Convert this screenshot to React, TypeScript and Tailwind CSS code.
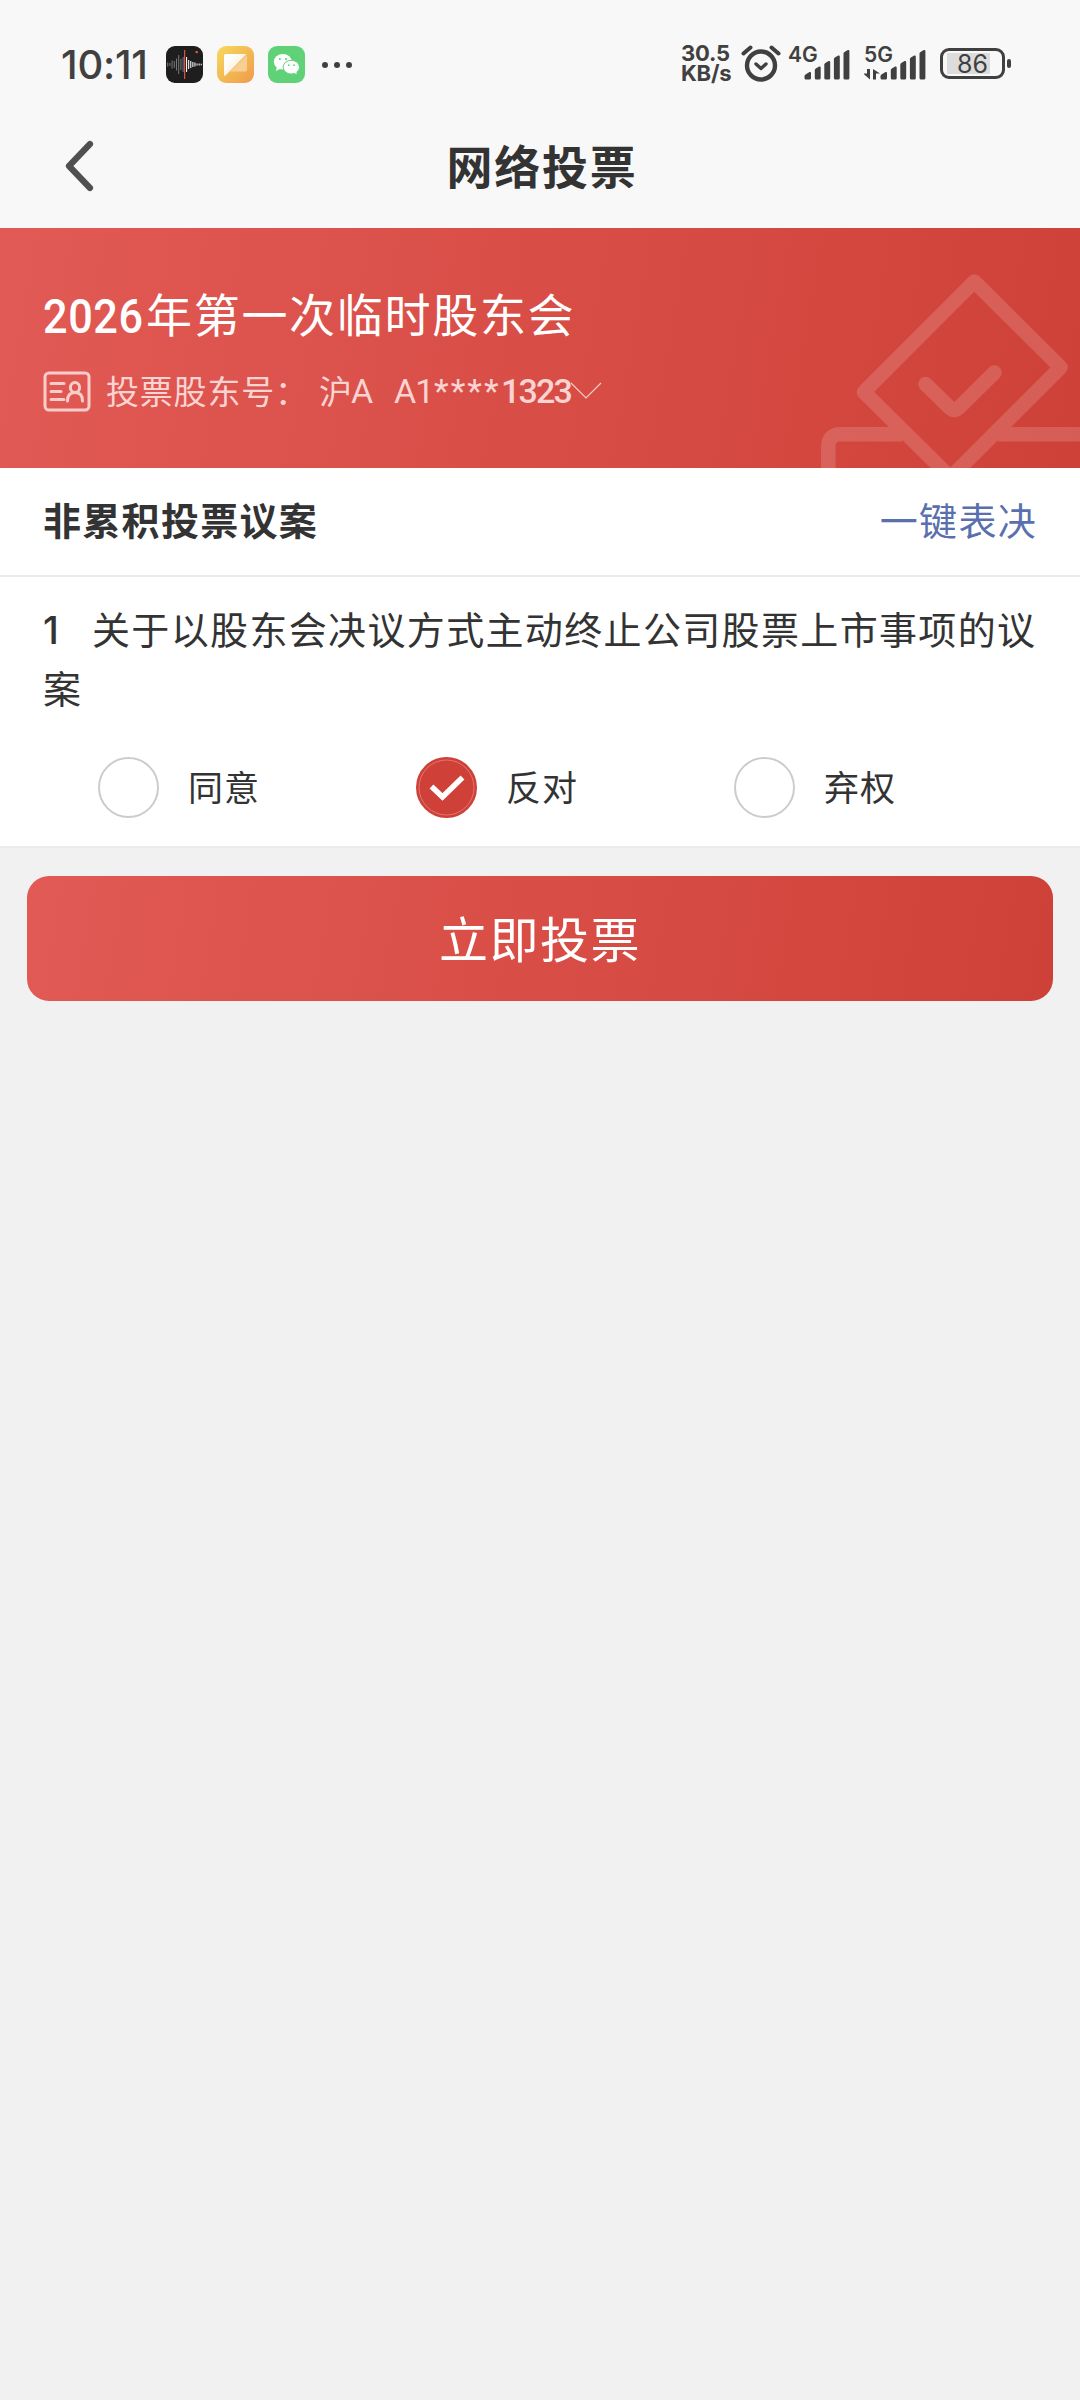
import React, { useState } from 'react'
import clsx from 'clsx'

type Choice = 'agree' | 'against' | 'abstain'

const CHOICES: { value: Choice; label: string }[] = [
  { value: 'agree', label: '同意' },
  { value: 'against', label: '反对' },
  { value: 'abstain', label: '弃权' },
]

const WAVE = [2, 1.5, 4, 3.5, 6, 9.5, 5.5, 7.5]
const WAVE_RIGHT = [7.5, 4.5, 3.5, 2.5, 2, 1, 1, 0.8]

const RecorderIcon = () => (
  <svg className="h-[37px] w-[37px]" viewBox="0 0 37 37">
    <rect width="37" height="37" rx="9" fill="#1e1e1f" />
    {WAVE.map((h, i) => (
      <rect key={i} x={1.2 + i * 2.2} y={18.5 - h} width="1" height={h * 2} fill="#77787a" />
    ))}
    {WAVE_RIGHT.map((h, i) => (
      <rect key={i} x={20 + i * 2.1} y={18.5 - h} width="1.1" height={h * 2} fill="#f1f1f1" />
    ))}
    <rect x="18" y="4" width="1.2" height="29" fill="#d9503c" />
    <rect x="29.5" y="5" width="2.4" height="2.2" fill="#d9503c" />
  </svg>
)

const NotesIcon = () => (
  <svg className="h-[37px] w-[37px]" viewBox="0 0 37 37">
    <defs>
      <linearGradient id="notes" x1="0" y1="0" x2="1" y2="1">
        <stop offset="0" stopColor="#f6da5c" />
        <stop offset="1" stopColor="#f09a4a" />
      </linearGradient>
      <linearGradient id="sheet" x1="0" y1="0" x2="1" y2="1">
        <stop offset="0.2" stopColor="#fff" />
        <stop offset="1" stopColor="#fbe3bf" />
      </linearGradient>
    </defs>
    <rect width="37" height="37" rx="9" fill="url(#notes)" />
    <path d="M30 9v14.5a2 2 0 0 1-2 2H13z" fill="#f8cf93" />
    <path d="M7 9.5a1.5 1.5 0 0 1 1.5-1.5H29.5L8.5 29.5a1 1 0 0 1-1.5-.8z" fill="url(#sheet)" />
  </svg>
)

const WechatIcon = () => (
  <svg className="h-[37px] w-[37px]" viewBox="0 0 37 37">
    <rect width="37" height="37" rx="9" fill="#5fd277" />
    <ellipse cx="14.8" cy="15.8" rx="9" ry="7.7" fill="#fff" />
    <path d="M9 21l-1.2 4 4.6-2.3z" fill="#fff" />
    <ellipse cx="23.3" cy="21.2" rx="8.2" ry="6.9" fill="#fff" stroke="#5fd277" strokeWidth="1" />
    <path d="M25.5 26.5l3.3 1.7-.7-3.2z" fill="#fff" />
    <circle cx="11.8" cy="13" r="1.1" fill="#5fd277" />
    <circle cx="18" cy="13" r="1.1" fill="#5fd277" />
    <circle cx="20.8" cy="19.2" r="0.9" fill="#5fd277" />
    <circle cx="26" cy="19.2" r="0.9" fill="#5fd277" />
  </svg>
)

const AlarmIcon = () => (
  <svg className="mt-[2px] h-[38px] w-[40px]" viewBox="0 0 40 38" fill="none" stroke="#404040" strokeLinecap="round">
    <circle cx="20" cy="20.5" r="14" strokeWidth="4.4" />
    <path d="M15 19l5 4.5 5-4.5" strokeWidth="3.4" strokeLinejoin="round" />
    <path d="M2.5 8.5l7-6M37.5 8.5l-7-6" strokeWidth="4" />
  </svg>
)

const Signal = ({ label, data }: { label: string; data?: boolean }) => (
  <div className="relative h-[36px] w-[64px]">
    <span className="absolute -top-px left-0 text-[21px] leading-[22px] font-semibold">{label}</span>
    <svg className="absolute inset-0" width="64" height="36" viewBox="0 0 64 36" fill="#404040">
      <path d="M16.5 33v-2q0-1 1-1.5l4-2.5q1.5-.5 1.5 1v5q0 1.5-1.5 1.5h-3.5q-1.5 0-1.5-1.5z" />
      <path d="M26.8 33v-8q0-1 1-1.5l3.3-2q1.6-.5 1.6 1V33q0 1.5-1.5 1.5h-2.9q-1.5 0-1.5-1.5z" />
      <path d="M36.3 33V19.5q0-1 1-1.5l3.3-2q1.6-.5 1.6 1v16q0 1.5-1.5 1.5h-2.9q-1.5 0-1.5-1.5z" />
      <path d="M45.9 33V14q0-1 1-1.5l3.3-2q1.6-.5 1.6 1V33q0 1.5-1.5 1.5h-2.9q-1.5 0-1.5-1.5z" />
      <path d="M55.5 33V8.5q0-1 1-1.5l3.3-2q1.6-.5 1.6 1v27q0 1.5-1.5 1.5h-2.9q-1.5 0-1.5-1.5z" />
      {data && <path d="M3 24h3v10.5L-1 28.5h4zM9 34.5h3v-6h4L9 24z" />}
    </svg>
  </div>
)

const StatusBar = () => (
  <div className="flex h-[104px] items-center pt-[25px] pr-[69px] pl-[61px] font-['Inter',sans-serif] text-[#404040]">
    <span className="w-[105px] text-[40px] leading-none font-medium tracking-[-0.2px]">10:11</span>
    <div className="flex gap-[14px]">
      <RecorderIcon />
      <NotesIcon />
      <WechatIcon />
    </div>
    <div className="ml-[17px] flex gap-[6px]">
      <i className="h-[6px] w-[6px] rounded-full bg-[#404040]" />
      <i className="h-[6px] w-[6px] rounded-full bg-[#404040]" />
      <i className="h-[6px] w-[6px] rounded-full bg-[#404040]" />
    </div>
    <div className="mb-[3px] ml-auto flex items-center">
      <div className="w-[60px] text-[22px] leading-[20px] font-bold tracking-[-0.2px]">
        <div>30.5</div>
        <div>KB/s</div>
      </div>
      <AlarmIcon />
      <div className="ml-[7px] flex gap-[12px]">
        <Signal label="4G" />
        <Signal label="5G" data />
      </div>
      <div className="ml-[12px] flex items-center gap-[2px]">
        <div className="flex h-[31px] w-[65px] items-center rounded-[9px] border-[3px] border-[#404040] px-[4px]">
          <span className="flex h-[21px] w-[43px] items-center justify-end bg-[#dcdcdc] pt-[2px] pr-[2px] text-[25px] leading-none">
            86
          </span>
        </div>
        <i className="h-[9px] w-[4px] rounded-sm bg-[#404040]" />
      </div>
    </div>
  </div>
)

const BallotWatermark = () => (
  <svg
    className="absolute top-0 right-0 opacity-15"
    width="300"
    height="240"
    viewBox="0 0 300 240"
    fill="none"
    stroke="#fff"
    strokeWidth="14.5"
    strokeLinecap="round"
    strokeLinejoin="round"
  >
    <path d="M194.3 53.5L280.6 139.3 170.5 249.5 83.9 164z" />
    <path d="M145.5 156L170 180q4.3 4 8.600 0L214.5 144.5" />
    <path d="M48.3 250v-31q0-12.7 12.7-12.7H122M218 206.3H310" strokeLinecap="butt" />
  </svg>
)

const IdCardIcon = () => (
  <svg className="h-[41px] w-[48px]" viewBox="0 0 48 41" fill="none" stroke="#f7cdcb" strokeWidth="3">
    <rect x="2" y="2" width="44" height="37" rx="4" />
    <path d="M8 12.5h13M8 20.5h10M8 28.5h13M24.5 30q0-8.5 7.5-8.5t7.5 8.5" strokeLinecap="round" />
    <ellipse cx="32" cy="16.5" rx="4.6" ry="5" />
  </svg>
)

const Radio = ({ label, checked, onSelect }: { label: string; checked: boolean; onSelect: () => void }) => (
  <button type="button" onClick={onSelect} className="flex w-[318px] items-center">
    <span
      className={clsx(
        'flex h-[61px] w-[61px] items-center justify-center rounded-full border-2',
        checked ? 'border-[#cf4138] bg-[#cf4138]' : 'border-[#cccccc] bg-white',
      )}
    >
      {checked && (
        <svg width="57" height="57" viewBox="0 0 57 57" fill="none">
          <circle cx="28.5" cy="28.5" r="27.5" stroke="#dd7770" strokeWidth="1" />
          <path d="M13.5 27.5l11 10.5L44.5 18.5" stroke="#fff" strokeWidth="5.5" />
        </svg>
      )}
    </span>
    <span className="mb-[3px] ml-[29px] text-[35px] leading-[58px] tracking-[1px]">{label}</span>
  </button>
)

const App: React.FC = () => {
  const [choice, setChoice] = useState<Choice>('against')

  return (
    <div className="min-h-[2400px] w-[1080px] bg-[#f1f1f1] font-['Noto_Sans_CJK_SC',sans-serif] text-[#333333]">
      <header className="h-[228px] bg-[#f8f8f8]">
        <StatusBar />
        <div className="grid h-[124px] grid-cols-[120px_1fr_120px] items-center">
          <svg className="ml-[64px]" width="34" height="54" viewBox="0 0 34 54" fill="none">
            <path d="M26 5L5 27l21 22" stroke="#505050" strokeWidth="6.2" strokeLinecap="round" strokeLinejoin="round" />
          </svg>
          <h1 className="mb-[5px] pl-[4px] text-center text-[46px] leading-none font-bold tracking-[1.8px]">网络投票</h1>
        </div>
      </header>

      <section className="relative h-[240px] overflow-hidden bg-linear-[100deg,#e25a55,#ce4138] px-[43px] pt-[49px] text-white">
        <BallotWatermark />
        <h2 className="flex h-[70px] text-[46px] leading-[70px] tracking-[1.7px]">
          <span className="mt-[5px] w-[103px] origin-left scale-x-90 font-['Roboto',sans-serif] text-[48px] font-medium tracking-[0.7px]">
            2026
          </span>
          年第一次临时股东会
        </h2>
        <div className="mt-[18px] flex h-[52px] items-center text-[33px] whitespace-pre text-[#fad4d2]">
          <IdCardIcon />
          <span className="ml-[15px] w-[213px] tracking-[0.8px]">投票股东号：</span>
          <span className="w-[32px]">沪</span>
          <span className="w-[43px] font-['Roboto',sans-serif] text-[34px]">A</span>
          <span className="w-[40px] font-['Roboto',sans-serif] text-[34px] tracking-[-0.9px]">A1</span>
          <span className="w-[67px] font-['Roboto',sans-serif] text-[34px] tracking-[2px]">****</span>
          <span className="w-[69px] font-['Roboto',sans-serif] text-[34px] font-medium tracking-[-1.8px]">1323</span>
          <svg width="32" height="18" viewBox="0 0 32 18" fill="none">
            <path d="M1 1l15 15L31 1" stroke="#f7cdcb" strokeWidth="1.2" />
          </svg>
        </div>
      </section>

      <section className="border-b-2 border-[#ebebeb] bg-white">
        <div className="flex h-[109px] items-center justify-between border-b-2 border-[#ebebeb] px-[43px] pb-[6px] text-[38px] leading-none tracking-[1.3px]">
          <h3 className="font-bold">非累积投票议案</h3>
          <button type="button" className="text-[#5a70ae]">
            一键表决
          </button>
        </div>
        <div className="h-[269px] pt-[21px]">
          <p className="mr-[40px] ml-[43px] h-[118px] text-[38px] leading-[59px] tracking-[1.35px]">
            <span className="inline-block w-[49px] font-['Inter',sans-serif] leading-none font-medium">1</span>
            关于以股东会决议方式主动终止公司股票上市事项的议案
          </p>
          <div className="mt-[41px] ml-[98px] flex">
            {CHOICES.map((c) => (
              <Radio key={c.value} label={c.label} checked={choice === c.value} onSelect={() => setChoice(c.value)} />
            ))}
          </div>
        </div>
      </section>

      <div className="px-[27px] pt-[28px]">
        <button
          type="button"
          className="h-[125px] w-full rounded-[22px] bg-linear-[100deg,#e25a55,#ce4138] pb-[5px] text-[49px] leading-none tracking-[1.5px] text-white"
        >
          立即投票
        </button>
      </div>
    </div>
  )
}

export default App
